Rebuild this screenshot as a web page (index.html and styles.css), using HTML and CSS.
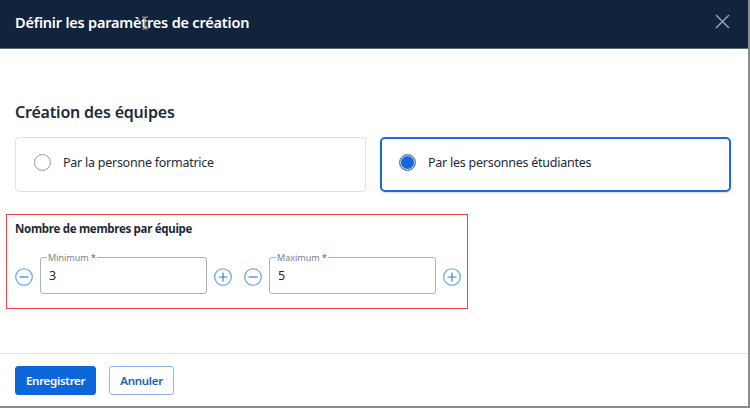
FILE: index.html
```html
<!doctype html>
<html>
    <head>
        <title>Définir les paramètres de création</title>
        <link rel="stylesheet" href="styles.css">
    </head>
    <body>
        <div class="dialog">
            <div class="dialog-header">
                <h1 class="dialog-title">Définir les paramètres de création</h1>
                <svg class="text-cursor" width="8" height="14" viewBox="0 0 8 14">
                    <path d="M1 1h2l1 1 1-1h2M4 2v10M1 13h2l1-1 1 1h2" fill="none" stroke="#a89d88" stroke-width="1.2"/>
                </svg>
                <button class="close-btn" aria-label="Fermer">
                    <svg width="15" height="15" viewBox="0 0 15 15">
                        <path d="M1 1L14 14M14 1L1 14" stroke="#8ea2b8" stroke-width="1.5"/>
                    </svg>
                </button>
            </div>

            <div class="dialog-body">
                <h2 class="section-title">Création des équipes</h2>

                <div class="options">
                    <label class="option">
                        <span class="radio"></span>
                        Par la personne formatrice
                    </label>
                    <label class="option option-selected">
                        <span class="radio radio-checked"></span>
                        Par les personnes étudiantes
                    </label>
                </div>

                <div class="members">
                    <h3 class="members-title">Nombre de membres par équipe</h3>
                    <div class="steppers">
                        <div class="stepper">
                            <button class="step-btn">
                                <svg width="18" height="18" viewBox="0 0 18 18"><circle cx="9" cy="9" r="8.3" fill="none" stroke="#5a9ae6" stroke-width="1.1"/><path d="M4.5 9h9" stroke="#3f7fd0" stroke-width="1.2"/></svg>
                            </button>
                            <fieldset class="field">
                                <legend>Minimum <span class="req">*</span></legend>
                                <span class="field-value">3</span>
                            </fieldset>
                            <button class="step-btn">
                                <svg width="18" height="18" viewBox="0 0 18 18"><circle cx="9" cy="9" r="8.3" fill="none" stroke="#5a9ae6" stroke-width="1.1"/><path d="M4.5 9h9M9 4.5v9" stroke="#3f7fd0" stroke-width="1.2"/></svg>
                            </button>
                        </div>
                        <div class="stepper">
                            <button class="step-btn">
                                <svg width="18" height="18" viewBox="0 0 18 18"><circle cx="9" cy="9" r="8.3" fill="none" stroke="#5a9ae6" stroke-width="1.1"/><path d="M4.5 9h9" stroke="#3f7fd0" stroke-width="1.2"/></svg>
                            </button>
                            <fieldset class="field">
                                <legend>Maximum <span class="req">*</span></legend>
                                <span class="field-value">5</span>
                            </fieldset>
                            <button class="step-btn">
                                <svg width="18" height="18" viewBox="0 0 18 18"><circle cx="9" cy="9" r="8.3" fill="none" stroke="#5a9ae6" stroke-width="1.1"/><path d="M4.5 9h9M9 4.5v9" stroke="#3f7fd0" stroke-width="1.2"/></svg>
                            </button>
                        </div>
                    </div>
                </div>
            </div>

            <div class="dialog-footer">
                <button class="btn btn-primary">Enregistrer</button>
                <button class="btn btn-secondary">Annuler</button>
            </div>
        </div>
    </body>
</html>
```

FILE: styles.css
```css
body {
margin: 0;
background: #8c8c8c;
font-family: "Noto Sans", "Open Sans", sans-serif;
color: #1f2a37;
}

.dialog {
width: 748px;
height: 406px;
background: #fff;
display: flex;
flex-direction: column;
}

.dialog-header {
position: relative;
height: 49px;
box-sizing: border-box;
padding: 0 18px 5px 15px;
display: flex;
align-items: center;
justify-content: space-between;
background: #12233d;
border-bottom: 1px solid #5f6b7b;
}

.dialog-title {
margin: 0;
font-size: 14.5px;
letter-spacing: -0.2px;
font-weight: 600;
color: #fff;
}

/* mouse pointer left over the title */
.text-cursor {
position: absolute;
left: 141px;
top: 16px;
}

.close-btn {
background: none;
border: 0;
padding: 0;
display: flex;
}

.dialog-body {
flex: 1;
padding: 52px 17px 0 15px;
}

.section-title {
margin: 0 0 14px;
font-size: 16px;
letter-spacing: -0.2px;
line-height: 22px;
font-weight: 600;
color: #1d2a38;
}

.options {
display: grid;
grid-template-columns: 1fr 1fr;
gap: 14px;
}

.option {
height: 55px;
box-sizing: border-box;
display: flex;
align-items: center;
gap: 12px;
padding: 0 0 4px 18px;
border: 1px solid #dfe3e7;
border-radius: 4px;
font-size: 12.5px;
letter-spacing: -0.25px;
color: #222c38;
}

.option-selected {
border: 2px solid #1a6cd9;
border-radius: 5px;
padding-left: 17px;
box-shadow: 0 1px 2px rgba(0, 0, 0, 0.15);
}

.radio {
width: 17px;
height: 17px;
box-sizing: border-box;
border: 1.5px solid #8f99a5;
border-radius: 50%;
}

.radio-checked {
border: 1px solid #6f7782;
background: #1467dc;
box-shadow: inset 0 0 0 1px #c9d8ef;
}

.members {
margin: 22px 0 0 -9px;
width: 462px;
box-sizing: border-box;
padding: 6px 0 14px 8px;
border: 1px solid #f04848;
}

.members-title {
margin: 0 0 16px;
font-size: 11.5px;
letter-spacing: -0.3px;
line-height: 16px;
font-weight: 700;
color: #1d2a38;
}

.steppers {
display: flex;
gap: 12px;
}

.stepper {
display: flex;
align-items: flex-end;
gap: 7px;
}

.step-btn {
background: none;
border: 0;
padding: 0;
margin-bottom: 8px;
display: flex;
}

.field {
margin: 0;
width: 167px;
height: 41px;
box-sizing: border-box;
padding: 0 0 0 8px;
border: 1px solid #a9b1bc;
border-radius: 3px;
display: flex;
align-items: center;
}

.field legend {
margin-left: -2px;
padding: 0 1px;
font-size: 9px;
line-height: 9px;
color: #7b838d;
}

.req {
color: #e0202a;
}

.field-value {
margin-top: -4px;
font-size: 12.5px;
color: #222c38;
}

.dialog-footer {
height: 53px;
box-sizing: border-box;
border-top: 1px solid #e4e4e4;
padding: 12px 15px 0;
display: flex;
gap: 13px;
}

.btn {
height: 29px;
box-sizing: border-box;
font-family: "Noto Sans", "Open Sans", sans-serif;
font-size: 11.5px;
letter-spacing: -0.3px;
font-weight: 600;
border-radius: 3px;
padding: 0 10px;
}

.btn-primary {
background: #0b67d9;
color: #fff;
border: 1px solid #0b67d9;
}

.btn-secondary {
background: #fff;
color: #1b5eb6;
border: 1px solid #8fb3e6;
}
```
